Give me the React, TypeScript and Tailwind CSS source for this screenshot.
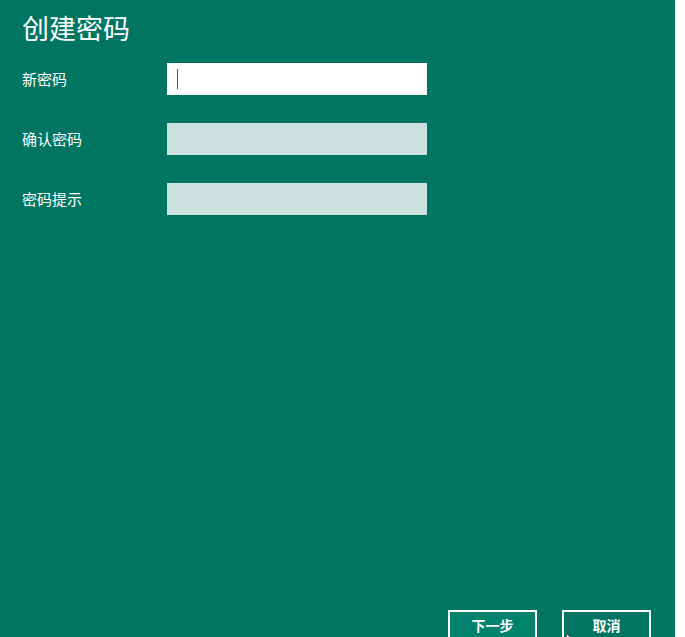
const fields = [
  { label: '新密码', active: true },
  { label: '确认密码', active: false },
  { label: '密码提示', active: false },
];

export default function App() {
  return (
    <div
      className="flex h-[637px] w-[685px] overflow-hidden bg-white"
      style={{ fontFamily: '"Noto Sans CJK SC", "Noto Sans", sans-serif' }}
    >
      <div className="flex h-full w-[675px] flex-col bg-[#007562] pl-[22px] text-white">
        {/* Title */}
        <h1 className="pt-[9px] text-[27px] font-normal leading-[38px]">创建密码</h1>

        {/* Form */}
        <div className="mt-[16px] flex flex-col gap-[28px]">
          {fields.map((f) => (
            <div key={f.label} className="flex items-center">
              <span className="w-[145px] text-[15px] leading-[20px]">{f.label}</span>
              <div
                className={
                  f.active
                    ? 'flex h-[32px] w-[260px] items-center bg-white pl-[10px]'
                    : 'h-[32px] w-[260px] bg-[#cce2df]'
                }
              >
                {f.active && <span className="h-[20px] w-px bg-[#555555]" />}
              </div>
            </div>
          ))}
        </div>

        {/* Buttons */}
        <div className="mt-auto mb-[-5px] flex justify-end gap-[25px] pr-[24px]">
          <button className="h-[32px] w-[89px] border-2 border-white bg-[#00826d] pb-[2px] text-[14px] font-bold leading-[20px] text-white">
            下一步
          </button>
          <button className="relative h-[32px] w-[89px] border-2 border-white bg-[#007562] pb-[2px] text-[14px] font-bold leading-[20px] text-white">
            取消
            <svg
              className="absolute left-[2px] top-[21px]"
              width="8"
              height="10"
              viewBox="0 0 8 10"
            >
              <path d="M0.5 0.5 L0.5 9 L3 6.5 L7 6.5 Z" fill="#ffffff" stroke="#333333" strokeWidth="0.8" />
            </svg>
          </button>
        </div>
      </div>
    </div>
  );
}
